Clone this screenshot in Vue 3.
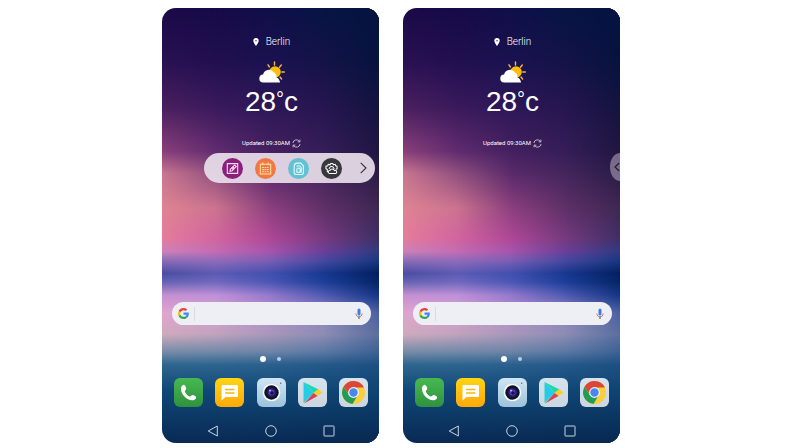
<script setup>
const positions = [0, 12, 23, 33, 38, 46, 53, 56, 58, 61, 63, 66, 70, 75, 79, 82, 88, 100]
const columns = [
  ['#1a0a46', '#2a1152', '#4b205f', '#8b407b', '#c97690', '#df8494', '#e67c9c', '#cb82ba', '#8d6db7', '#4b4ca2', '#6664b2', '#c590d0', '#e0a5d0', '#cfabbd', '#788da8', '#2f668f', '#0f4877', '#0a2a55'],
  ['#170a48', '#210f50', '#3a1a5c', '#612c70', '#90507e', '#cb738f', '#d264a0', '#c26cb2', '#936bba', '#5b5cb4', '#7169be', '#be90d8', '#d8a0d0', '#c0a3bd', '#7389a8', '#2e658f', '#104877', '#0a2a54'],
  ['#100f48', '#1a1250', '#2e1858', '#44205f', '#5a2a6a', '#8c3f7e', '#ae4896', '#a455ac', '#7d5db4', '#4150ae', '#4a57b4', '#9378cc', '#b890cc', '#a897bb', '#6d84a8', '#2b608e', '#104877', '#0a2a54'],
  ['#061544', '#141347', '#261650', '#351e58', '#44265c', '#5e3068', '#763a7e', '#683f98', '#47489e', '#17388f', '#1c3e98', '#4e5ab0', '#9486c0', '#8c8cb4', '#5b78a4', '#24598a', '#0f4675', '#092952'],
  ['#041340', '#06133e', '#141440', '#201642', '#2a1c48', '#3f2752', '#3e2f68', '#2e3a80', '#183882', '#041f60', '#052565', '#143585', '#4a60a2', '#5b6f9e', '#3c6294', '#1d5082', '#0e4474', '#082850']
]
const layers = columns.map((colors, i) => ({
  background: `linear-gradient(180deg, ${colors.map((c, n) => `${c} ${positions[n]}%`).join(', ')})`,
  maskImage: i ? `linear-gradient(90deg, transparent ${(i - 1) * 25}%, #000 ${i * 25}%)` : 'none'
}))
const phones = [
  { id: 'open', expanded: true },
  { id: 'closed', expanded: false }
]
</script>

<template>
  <main class="stage">
    <section v-for="phone in phones" :key="phone.id" class="phone">
      <div class="wallpaper">
        <div v-for="(layer, i) in layers" :key="i" class="layer" :style="layer"></div>
      </div>

      <div class="weather">
        <div class="city">
          <svg class="pin" viewBox="0 0 6 8"><path d="M3 0a2.7 2.7 0 0 0-2.7 2.8C.3 4.700 3 8 3 8s2.700-3.300 2.700-5.200A2.700 2.700 0 0 0 3 0z" fill="#fff"/><circle cx="3" cy="2.800" r=".8" fill="#51437a"/></svg>
          <span>Berlin</span>
        </div>
        <svg class="sky" viewBox="0 0 26 22">
          <g stroke="#f2b54c" stroke-width="1.400" stroke-linecap="round">
            <path d="M15.500 1v3M9 3.800l1.400 2.200M22.300 4l-1.800 2.200M22.800 11h2.500M21 16l1.600 2"/>
          </g>
          <circle cx="16" cy="11" r="5.800" fill="#fdbd0c"/>
          <path d="M4.500 21.500a4 4 0 0 1-.4-8 6 6 0 0 1 10.700-2.200 5 5 0 0 1 2.700 5.200c2 .5 2.300 1.700 3.500 4.200.2.500-.1.800-.6.800z" fill="#fff"/>
        </svg>
        <div class="temp"><span>28</span><span class="degree">°</span><span>c</span></div>
        <div class="updated">
          <span>Updated 09:30AM</span>
          <button class="plain refresh" aria-label="Refresh">
            <svg viewBox="0 0 10 10" fill="none" stroke="#ded5e4" stroke-width=".9"><path d="M1 4.500A4 4 0 0 1 8.300 2.700M9 5.500A4 4 0 0 1 1.700 7.300M8.800.7v2.500H6.300M1.200 9.300V6.800h2.500"/></svg>
          </button>
        </div>
      </div>

      <div class="shelf">
        <div v-if="phone.expanded" class="toolbar">
          <button class="tool memo" aria-label="Capture">
            <svg viewBox="0 0 12 12" fill="none" stroke="#f2d8ee" stroke-width="1"><path d="M1.200 1.500h9.600v9H1.200z"/><path d="M3.700 8.500l.4-2L8 2.800l1.500 1.400-3.800 3.900zM5.500 6.700l2-2"/></svg>
          </button>
          <button class="tool calendar" aria-label="Calendar">
            <svg viewBox="0 0 12 12" fill="none" stroke="#ffe2a6" stroke-width="1"><path d="M1.200 2h9.600v9H1.200zM3.500.5v2.500M8.500.5v2.500"/><path d="M3 5h6M3 7h6M3 9h6" stroke-dasharray="1.500 .7"/></svg>
          </button>
          <button class="tool pages" aria-label="Saved pages">
            <svg viewBox="0 0 12 12" fill="none" stroke="#e0fbff" stroke-width="1"><path d="M2 10V4q0-3 3-3h3l2.500 2.500V10q0 1.500-1.500 1.500H3.500Q2 11.500 2 10z"/><path d="M4 4q3-1.500 4.500 1v4.500h-4V7q0-1.500 1.500-1.500T7.500 7v2"/></svg>
          </button>
          <button class="tool camera" aria-label="Camera settings">
            <svg viewBox="0 0 14 13" fill="none" stroke="#fff" stroke-width="1.100"><path d="M3.800 10H2.500V7.500L1 6.800V4l2-.4.500-1.600L5.500 2.500 6.300 1h2l.7 1.500 2-.5.500 1.600 1.500.4v2.800l-1.300.5"/><path d="M4.500 7a2.600 2.600 0 1 1 5.200 0"/><path d="M5 12a1.700 1.700 0 0 1 .3-3.400 2.500 2.500 0 0 1 4.700 0 1.700 1.700 0 0 1 1.500 3.400z"/></svg>
          </button>
          <button class="plain collapse" aria-label="Collapse toolbar">
            <svg viewBox="0 0 7 12" fill="none" stroke="#33303a" stroke-width="1.100"><path d="M.7.8 6 6 .7 11.200"/></svg>
          </button>
        </div>
        <button v-else class="handle" aria-label="Open toolbar">
          <svg viewBox="0 0 6 10" fill="none" stroke="#241b31" stroke-width="1.200"><path d="M5.200 1 1 5l4.200 4"/></svg>
        </button>
      </div>

      <label class="search">
        <svg class="google" viewBox="0 0 48 48">
          <path fill="#ea4335" d="M24 9.500c3.500 0 6.700 1.200 9.200 3.600l6.900-6.900C35.900 2.400 30.500 0 24 0 14.600 0 6.500 5.400 2.600 13.200l8 6.200C12.400 13.700 17.700 9.500 24 9.500z"/>
          <path fill="#4285f4" d="M47 24.600c0-1.600-.2-3.100-.4-4.600H24v9h12.900c-.6 3-2.300 5.500-4.800 7.200l7.700 6C44.400 38 47 32 47 24.600z"/>
          <path fill="#fbbc05" d="M10.500 28.600a14.500 14.500 0 0 1 0-9.200l-8-6.200a24 24 0 0 0 0 21.600z"/>
          <path fill="#34a853" d="M24 48c6.500 0 11.900-2.100 15.900-5.800l-7.700-6c-2.200 1.500-4.900 2.300-8.200 2.300-6.300 0-11.600-4.200-13.500-9.900l-8 6.200C6.500 42.600 14.600 48 24 48z"/>
        </svg>
        <input type="search" aria-label="Search" />
        <svg class="mic" viewBox="0 0 8 12" fill="none"><path d="M4 2v4" stroke="#3c80dc" stroke-width="3" stroke-linecap="round"/><path d="M.9 5.500c0 2 1.200 3.300 3.100 3.300" stroke="#b18461"/><path d="M7.100 5.500c0 2-1.200 3.300-3.100 3.300" stroke="#d5665a"/><path d="M4 8.800v2.200" stroke="#4e7f95" stroke-width="1.300"/></svg>
      </label>

      <div class="pager"><i class="dot active"></i><i class="dot"></i></div>

      <nav class="dock">
        <button class="app dialer" aria-label="Phone">
          <svg viewBox="0 0 29 29"><path d="M7.100 9.200c.9-1.700 2.100-2.700 3.200-2.300 1.100.7 1.700 2.200 2 3.500.1 1.300-1.600 1.900-1.500 3 .8 2.100 2.700 4.100 4.900 5 1.200.2 1.700-1.600 3-1.500 1.300.3 2.800 1 3.400 2.100.3 1.400-1.100 2.700-2.800 3.200C13 23.200 5.800 15.400 7.100 9.200z" fill="#fff"/></svg>
        </button>
        <button class="app messages" aria-label="Messages">
          <svg viewBox="0 0 29 29"><path d="M8 7h13.500c1 0 1.500.5 1.500 1.500v9c0 1-.5 1.500-1.500 1.500H10.500L6.500 22.500v-14C6.500 7.500 7 7 8 7z" fill="#fff"/><path d="M10 11.500h9.500M10 15h9.500" stroke="#f2b916" stroke-width="1.300"/></svg>
        </button>
        <button class="app photo" aria-label="Camera">
          <svg viewBox="0 0 29 29"><circle cx="14.500" cy="14.500" r="8.800" fill="#f5fafc"/><circle cx="14.500" cy="14.500" r="7.200" fill="#10121f"/><circle cx="14.500" cy="14.500" r="4.800" fill="#24176f"/><circle cx="14.500" cy="14.500" r="3" fill="#5540bb"/><circle cx="15" cy="15" r="1.800" fill="#181044"/><circle cx="13" cy="12.500" r="1" fill="#b6b1ed"/><circle cx="23.700" cy="5.300" r=".7" fill="#596570"/></svg>
        </button>
        <button class="app play" aria-label="Play Store">
          <svg viewBox="0 0 29 29"><path d="M5.500 4 15.500 15 5.500 25z" fill="#24cde4"/><path d="M5.500 4 20.500 11.500 15.500 15z" fill="#19d9b2"/><path d="M20 11.200 24.500 14.500 19.500 18 15.500 15z" fill="#fbcc28"/><path d="M15.500 15 19.500 18 6 25.500z" fill="#d54357"/></svg>
        </button>
        <button class="app chrome" aria-label="Chrome">
          <svg viewBox="0 0 29 29"><circle cx="14.500" cy="14.500" r="11.500" fill="#fbce3b"/><path d="M4.540 8.750A11.500 11.500 0 0 1 24.900 9.500H14.500L10.200 17z" fill="#dc4639"/><path d="M4.540 8.750 10.200 17.200 14.500 19.500 18.800 17 13.500 26A11.500 11.500 0 0 1 4.540 8.750z" fill="#229b57"/><circle cx="14.500" cy="14.500" r="5.400" fill="#eef2f5"/><circle cx="14.500" cy="14.500" r="4.200" fill="#4688ee"/></svg>
        </button>
      </nav>

      <div class="system">
        <button class="plain" aria-label="Back"><svg viewBox="0 0 12 12"><path d="M10.300 1v10L1.200 6z"/></svg></button>
        <button class="plain" aria-label="Home"><svg viewBox="0 0 12 12"><circle cx="6" cy="6" r="5.300"/></svg></button>
        <button class="plain" aria-label="Recent apps"><svg viewBox="0 0 12 12"><rect x="1" y="1" width="10" height="10" rx=".5"/></svg></button>
      </div>
    </section>
  </main>
</template>

<style>
body { background: #fff; }
</style>

<style scoped>
* { box-sizing: border-box; }
.stage {
  display: grid;
  grid-template-columns: repeat(2, minmax(0, 217px));
  gap: 24px;
  justify-content: center;
  padding: 8px 18px 4px 0;
  font-family: Roboto, "Liberation Sans", sans-serif;
  color: #fff;
}
.phone {
  position: relative;
  isolation: isolate;
  display: flex;
  flex-direction: column;
  padding: 27px 0 6px;
  border-radius: 14px;
  overflow: hidden;
}
.wallpaper, .layer { position: absolute; inset: 0; }
.wallpaper { z-index: -1; }
button {
  display: grid;
  place-items: center;
  border: 0;
  padding: 0;
  cursor: pointer;
}
.plain { background: none; }
svg { display: block; }
.weather { display: flex; flex-direction: column; align-items: center; padding-left: 2px; }
.city {
  display: flex;
  align-items: center;
  gap: 7px;
  font-size: 10px;
  font-weight: 300;
  line-height: 14px;
}
.pin { width: 6px; height: 8px; }
.sky { width: 26px; height: 22px; margin-top: 12px; }
.temp {
  display: flex;
  align-items: flex-start;
  height: 32px;
  margin-top: 3px;
  font-family: "Liberation Sans", sans-serif;
  font-size: 28px;
  line-height: 32px;
}
.degree { font-size: 20px; line-height: 26px; }
.updated {
  display: flex;
  align-items: center;
  gap: 2px;
  margin-top: 20px;
  font-size: 6px;
  line-height: 10px;
}
.refresh svg { width: 9px; height: 9px; }
.shelf { display: flex; justify-content: flex-end; margin-top: 5px; height: 30px; }
.toolbar {
  display: flex;
  align-items: center;
  gap: 12px;
  width: 171px;
  margin-right: 4px;
  padding: 0 8px 0 18px;
  border-radius: 15px;
  background: rgba(231, 222, 233, 0.93);
}
.tool { width: 21px; height: 21px; border-radius: 50%; }
.tool svg { width: 13px; height: 13px; }
.memo { background: #8b207c; }
.calendar { background: #f17843; }
.pages { background: #63c1d2; }
.camera { background: #38373b; }
.collapse { margin-left: auto; }
.collapse svg { width: 7px; height: 12px; }
.handle {
  justify-items: end;
  width: 10px;
  height: 28px;
  border-radius: 10px 0 0 10px / 14px 0 0 14px;
  background: rgba(163, 150, 177, 0.65);
}
.handle svg { width: 6px; height: 10px; }
.search {
  display: flex;
  align-items: center;
  height: 23px;
  margin: 119px 8px 0 10px;
  padding: 0 8px 0 6px;
  border-radius: 12px;
  background: #eeeff5;
}
.google { width: 11px; height: 11px; }
.search input {
  flex: 1;
  min-width: 0;
  height: 14px;
  margin-left: 5px;
  padding: 0 6px;
  border: 0;
  border-left: 1px solid #d7dbe2;
  outline: 0;
  background: none;
  font: 9px Roboto, sans-serif;
}
.mic { width: 8px; height: 12px; }
.pager {
  display: flex;
  align-items: center;
  justify-content: center;
  gap: 11px;
  height: 6px;
  margin: 31px 0 16px;
}
.dot { width: 4px; height: 4px; border-radius: 50%; background: #b4cfeb; }
.active { width: 6px; height: 6px; background: #fff; }
.dock { display: flex; justify-content: space-between; padding: 0 11px 0 12px; }
.app { width: 29px; height: 29px; border-radius: 6px; overflow: hidden; }
.app svg { width: 29px; height: 29px; }
.dialer { background: linear-gradient(#47b950, #2f913f); }
.messages { background: linear-gradient(#ffd414, #ffa80a); }
.photo { background: linear-gradient(#d2e6f4, #9cc2da); }
.play, .chrome { background: linear-gradient(#d6e3ed, #cbd6df); }
.system { display: flex; justify-content: center; gap: 46px; margin-top: 18px; }
.system svg { width: 12px; height: 12px; fill: none; stroke: #c9d3df; stroke-width: 1; }
</style>
